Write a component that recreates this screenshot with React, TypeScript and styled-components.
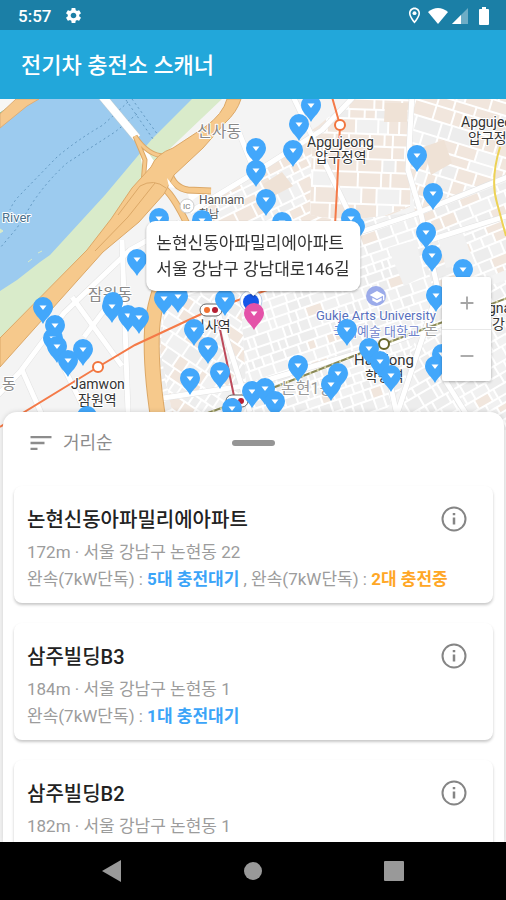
import React from "react";
import styled, { createGlobalStyle } from "styled-components";
import {
  MdAdd,
  MdOutlineLocationOn,
  MdRemove,
  MdSchool,
  MdSettings,
  MdSort,
} from "react-icons/md";

const GlobalStyle = createGlobalStyle`
  * { box-sizing: border-box; }
  body {
    margin: 0;
    background: #fff;
    font-family: Roboto, "Noto Sans CJK KR", sans-serif;
  }
  button {
    border: 0;
    padding: 0;
    background: none;
    color: inherit;
    font: inherit;
    cursor: pointer;
  }
  h1, h2, p, ul { margin: 0; padding: 0; }
  svg { display: block; }
`;

const Screen = styled.div`
  display: flex;
  flex-direction: column;
  height: 100vh;
  overflow: hidden;
`;

const StatusBar = styled.div`
  display: flex;
  flex: none;
  align-items: center;
  justify-content: space-between;
  height: 30px;
  padding: 1px 16px 0 18px;
  background: #1b7fa6;
  color: #fff;
`;

const StatusGroup = styled.div<{ $gap: number }>`
  display: flex;
  align-items: center;
  gap: ${(p) => p.$gap}px;
`;

const Clock = styled.span`
  font-size: 17px;
  font-weight: 500;
  line-height: 20px;
`;

const AppBar = styled.header`
  display: flex;
  flex: none;
  align-items: center;
  height: 69px;
  padding: 2px 21px 0;
  background: #22a7da;
  color: #fff;
`;

const AppTitle = styled.h1`
  font-size: 22px;
  font-weight: 500;
  line-height: 32px;
`;

const Main = styled.main`
  display: grid;
  flex: 1;
  min-height: 0;
  grid-template: minmax(0, 1fr) / minmax(0, 1fr);
  overflow: hidden;
`;

const MapArea = styled.section`
  position: relative;
  grid-area: 1 / 1;
  overflow: hidden;
`;

const MapDrawing = styled.svg`
  width: 100%;
  height: 100%;
`;

const Callout = styled.div`
  position: absolute;
  top: 122px;
  left: 50%;
  padding: 9px 10px;
  border-radius: 9px;
  background: #fff;
  color: #333;
  font-size: 17px;
  line-height: 26px;
  white-space: nowrap;
  transform: translateX(-50%);
  filter: drop-shadow(0 1px 1px rgba(0, 0, 0, 0.35));

  &::after {
    content: "";
    position: absolute;
    top: 100%;
    left: 50%;
    border: 5px solid transparent;
    border-top-color: #fff;
    transform: translateX(-50%);
  }
`;

const ZoomControl = styled.div`
  position: absolute;
  top: 178px;
  right: 15px;
  display: flex;
  flex-direction: column;
  width: 49px;
  border-radius: 2px;
  background: #fff;
  box-shadow: 0 1px 3px rgba(0, 0, 0, 0.3);
`;

const ZoomButton = styled.button`
  display: flex;
  align-items: center;
  justify-content: center;
  height: 52px;
  color: #a5a5a5;

  & + & { border-top: 1px solid #e8e8e8; }
`;

const Sheet = styled.section`
  z-index: 1;
  grid-area: 1 / 1;
  margin: 313px 2px 0 3px;
  border-radius: 14px 14px 0 0;
  background: #fff;
  box-shadow: 0 0 5px rgba(0, 0, 0, 0.15);
  overflow: hidden;
`;

const SheetHeader = styled.div`
  display: grid;
  grid-template-columns: 1fr auto 1fr;
  align-items: center;
  height: 74px;
  padding: 0 24px 12px;
`;

const SortButton = styled.button`
  display: flex;
  align-items: center;
  justify-self: start;
  gap: 8px;
  color: #8c8c8c;
  font-size: 18px;
  line-height: 26px;
`;

const Handle = styled.span`
  width: 43px;
  height: 6px;
  border-radius: 3px;
  background: #959595;
`;

const StationList = styled.ul`
  display: flex;
  flex-direction: column;
  gap: 20px;
  padding: 0 11px;
  list-style: none;
`;

const StationCard = styled.li`
  flex: none;
  min-height: 117px;
  padding: 16px 24px 10px 13px;
  border-radius: 8px;
  background: #fff;
  box-shadow: 0 2px 3px rgba(0, 0, 0, 0.22);
`;

const StationHeading = styled.div`
  display: flex;
  align-items: center;
  justify-content: space-between;
  height: 34px;
  margin-bottom: 3px;
`;

const StationName = styled.h2`
  padding-top: 1px;
  color: #222;
  font-size: 20px;
  font-weight: 500;
  line-height: 30px;
`;

const InfoButton = styled.button`
  color: #858585;
`;

const StationLine = styled.p`
  color: #9c9c9c;
  font-size: 17px;
  line-height: 27px;
  white-space: nowrap;
`;

const Availability = styled.strong<{ $busy?: boolean }>`
  color: ${(p) => (p.$busy ? "#ffa726" : "#3ba4f8")};
  font-weight: 700;
`;

const NavBar = styled.nav`
  display: grid;
  flex: none;
  grid-template-columns: repeat(3, 1fr);
  height: 58px;
  padding: 0 42px;
  background: #000;
`;

const NavButton = styled.button`
  display: flex;
  align-items: center;
  justify-content: center;
`;

const MapLabel = styled.text<{ $size?: number; $tone?: string; $halo?: number }>`
  fill: ${(p) => p.$tone ?? "#333"};
  font-size: ${(p) => p.$size ?? 13}px;
  paint-order: stroke;
  stroke: #fff;
  stroke-width: ${(p) => p.$halo ?? 2}px;
  stroke-linejoin: round;
`;

type Block = { x: number; y: number; w: number; h: number; fill: string };

const districts = [
  { id: "sinsa", area: "196,207 256,172 322,130 356,99 410,99 410,207 340,235 190,250", angle: -26, size: 10, warm: 0.5 },
  { id: "apgujeong", area: "350,99 412,99 410,206 360,225 310,215 312,130", angle: 2, size: 12, warm: 0.72 },
  { id: "cheongdam", area: "412,99 506,99 506,178 415,212 408,170", angle: 17, size: 12, warm: 0.65 },
  { id: "dosan", area: "418,216 506,182 506,270 432,300", angle: -22, size: 10, warm: 0.35 },
  { id: "nonhyeon", area: "172,240 418,212 440,330 385,412 165,430 158,350", angle: -19, size: 8, warm: 0.06 },
  { id: "yeongdong", area: "166,300 240,290 248,412 172,412 160,350", angle: 34, size: 9, warm: 0.22 },
  { id: "hakdong", area: "440,300 506,280 506,430 395,430 410,350", angle: -30, size: 8, warm: 0.05 },
];

function blocksFor(seed: number, size: number, warm: number): Block[] {
  let state = seed * 7919 + 17;
  const next = () => {
    state = (state * 16807) % 2147483647;
    return state / 2147483647;
  };
  next();
  const blocks: Block[] = [];
  let y = -200;
  while (y < 200) {
    const h = size * (0.6 + next() * 0.8);
    let x = -200;
    while (x < 200) {
      const w = size * (0.5 + next() * 1.5);
      const fill = next() < warm ? "#f1e6dd" : next() < 0.5 ? "#f1f1f1" : "#ededed";
      blocks.push({ x, y, w, h, fill });
      x += w + 2;
    }
    y += h + 2;
  }
  return blocks;
}

const mainRoads = [
  "M190 212 L256 172 L322 130 L360 90",
  "M412 95 L408 170 L420 210 L438 290 L425 330 L395 420",
  "M330 242 L415 214 L510 176",
  "M430 240 L510 215",
  "M150 400 L250 385 L385 345 L510 300",
  "M382 346 L398 420",
  "M445 380 L470 420",
  "M290 90 L350 215",
  "M-5 398 L20 372 L64 313 L130 250 L180 222",
  "M22 370 L42 415",
  "M48 335 L92 425",
  "M72 297 L122 366",
  "M84 337 L112 300",
  "M122 240 L128 412",
  "M238 130 L252 165",
  "M214 300 L250 412",
];

const pins: [number, number][] = [
  [311, 105], [299, 124], [293, 150], [256, 148], [256, 170], [266, 199],
  [417, 155], [433, 193], [426, 232], [432, 255], [282, 222], [355, 226],
  [351, 218], [159, 218], [202, 220], [137, 259], [43, 307], [55, 325],
  [53, 338], [57, 346], [83, 349], [68, 360], [113, 302], [112, 306],
  [128, 315], [139, 317], [178, 296], [164, 298], [225, 299], [194, 329],
  [208, 347], [190, 378], [220, 372], [232, 408], [87, 416], [463, 269],
  [436, 295], [347, 329], [369, 348], [380, 361], [391, 375], [298, 365],
  [338, 373], [331, 384], [252, 391], [265, 388], [275, 401], [442, 354],
  [435, 366],
];

function Pin({ x, y, color = "#42a7fb" }: { x: number; y: number; color?: string }) {
  return (
    <g transform={`translate(${x} ${y})`}>
      <path d="M0 17 C-3 11 -10 7 -10 0 A10 10 0 0 1 10 0 C10 7 3 11 0 17Z" fill={color} />
      <path d="M-3.5 -1.5 H3.5 L0 3Z" fill="#fff" />
    </g>
  );
}

function TransferBadge({ x, y }: { x: number; y: number }) {
  return (
    <g transform={`translate(${x} ${y})`}>
      <rect x="-11" y="-6" width="22" height="12" rx="6" fill="#fff" stroke="#666" />
      <circle cx="-4" r="3" fill="#f07030" />
      <circle cx="4" r="3" fill="#b51e32" />
    </g>
  );
}

function InfoIcon() {
  return (
    <svg width="30" height="30" viewBox="0 0 30 30" fill="none" stroke="currentColor" strokeWidth="2">
      <circle cx="15" cy="15" r="11.5" />
      <path d="M15 13.500 V20.500 M15 9 V11.200" strokeWidth="2.500" />
    </svg>
  );
}

function CityMap() {
  return (
    <MapDrawing viewBox="0 99 506 743" preserveAspectRatio="xMidYMin slice" role="img" aria-label="충전소 지도">
      <defs>
        {districts.map((d) => (
          <clipPath id={d.id} key={d.id}>
            <polygon points={d.area} />
          </clipPath>
        ))}
      </defs>
      <rect y="99" width="506" height="743" fill="#f4f4f4" />

      {districts.map((d, i) => {
        const points = d.area.split(" ").map((p) => p.split(",").map(Number));
        const cx = points.reduce((sum, p) => sum + p[0], 0) / points.length;
        const cy = points.reduce((sum, p) => sum + p[1], 0) / points.length;
        return (
          <g clipPath={`url(#${d.id})`} key={d.id}>
            <polygon points={d.area} fill="#fff" />
            <g transform={`translate(${cx} ${cy}) rotate(${d.angle})`}>
              {blocksFor(i + 3, d.size, d.warm).map((b, n) => (
                <rect key={n} x={b.x} y={b.y} width={b.w} height={b.h} fill={b.fill} />
              ))}
            </g>
          </g>
        );
      })}
      <polygon points="385,103 408,103 407,122 384,122" fill="#efe2d6" />
      <polygon points="423,147 444,140 452,163 431,175" fill="#efe2d6" />
      <polygon points="263,184 282,172 293,186 268,199" fill="#efe2d6" />
      <polygon points="388,248 416,240 424,276 404,286" fill="#f1f1f1" />
      <polygon points="438,238 462,231 474,262 446,268" fill="#f1f1f1" />
      <polygon points="196,99 350,99 318,126 196,196 178,180" fill="#f4f4f4" />

      <g fill="none" strokeLinejoin="round">
        {mainRoads.map((d) => <path key={d} d={d} stroke="#e2e2e2" strokeWidth="6" />)}
        {mainRoads.map((d) => <path key={d} d={d} stroke="#fff" strokeWidth="5" />)}
      </g>

      <path d="M0 99 H222 L160 158 L125 205 L87 250 L0 338Z" fill="#d9ebca" />
      <path d="M0 99 H192 L152 139 L105 195 L50 255 L40 262 L17 280 L0 291Z" fill="#9ccbef" />
      <path d="M0 99 H22 L0 117Z" fill="#f7f7f5" />
      <path d="M0 113 L20 99" stroke="#87bd89" fill="none" />
      <path d="M16 99 H39 L27 106 L0 128 V114Z" fill="#f6c88c" stroke="#dcae78" />
      <g fill="none" stroke="#6399c2" strokeDasharray="2 3">
        <path d="M128 102 L103 125 Q77 140 57 157 L20 195 Q13 202 10 210" />
        <path d="M137 114 L115 132 L67 163 Q48 180 33 202 L17 228 L0 248" />
        <path d="M126 100 L153 139 M132 99 L158 135" />
      </g>
      <path d="M0 229 L3 231 L0 233Z M28 262 L32 259 M38 253 L42 251" fill="#d9ebca" stroke="#d9ebca" />

      <path d="M102 96 L137 138" stroke="#b9cbd6" strokeWidth="9" fill="none" />
      <path d="M102 96 L137 138" stroke="#fff" strokeWidth="8" fill="none" />
      <path d="M137 136 L156 164 L145 182Z" fill="#fff" />
      <g fill="none" strokeLinejoin="round">
        <path d="M135 136 Q148 156 165 156 M135 136 L145 160 L143 184" stroke="#dca867" strokeWidth="5" />
        <path d="M135 136 Q148 156 165 156 M135 136 L145 160 L143 184" stroke="#f6c98c" strokeWidth="3" />
        <path d="M169 172 Q174 188 188 190 L211 191 M160 185 Q172 192 188 226" stroke="#dca867" strokeWidth="7" />
        <path d="M169 172 Q174 188 188 190 L211 191 M160 185 Q172 192 188 226" stroke="#f6c98c" strokeWidth="5" />
        <path d="M188 226 Q154 290 152 330 Q150 370 160 430" stroke="#dca867" strokeWidth="16" />
        <path d="M188 226 Q154 290 152 330 Q150 370 160 430" stroke="#f6c98c" strokeWidth="14" />
      </g>
      <path d="M227 99 H241 Q237 112 225 123 L203 148 L174 175 L164 194 L139 222 L103 252 L0 367 V338 L87 250 L111 219 L132 188 L151 167 Q156 154 173 148 L205 127 Q223 114 227 99Z" fill="#f6c98c" stroke="#dca867" />
      <path d="M155 183 L128 217 L95 251 M118 215 L140 186 Q154 178 166 188" fill="none" stroke="#dca867" />
      <path d="M167 178 L175 188 L169 187Z M188 194 L201 194 L190 202Z" fill="#fff" />

      <g fill="none" strokeWidth="2">
        <path d="M332 97 L340 125 L337 190 L335 225 L310 275 L210 310 L135 345 L98 367 L0 427" stroke="#f47a48" />
        <path d="M218 320 L234 396" stroke="#bd4a5b" />
        <path d="M205 414 L238 402 L275 387 L384 344 L510 297" stroke="#8a8957" />
        <path d="M205 414 L238 402 L275 387 L384 344 L510 297" stroke="#d3d1a1" strokeDasharray="2 6" />
        <path d="M500 147 Q490 180 497 203 L506 236" stroke="#edd255" />
      </g>
      <circle cx="340" cy="125" r="5" fill="#fff" stroke="#f1743c" strokeWidth="2" />
      <circle cx="98" cy="367" r="5" fill="#fff" stroke="#f1743c" strokeWidth="2" />
      <circle cx="384" cy="344" r="5" fill="#fff" stroke="#666529" strokeWidth="2" />
      <TransferBadge x={211} y={310} />
      <TransferBadge x={237} y={401} />
      <circle cx="187" cy="206" r="7" fill="#fff" stroke="#ccc" />
      <MapLabel x="183" y="209" $size={8} $tone="#777" $halo={0}>IC</MapLabel>
      <circle cx="376" cy="296" r="10" fill="#9babea" />
      <MdSchool x="369" y="289" width="14" height="14" color="#fff" />

      <MapLabel x="197" y="137" $size={16} $tone="#888">신사동</MapLabel>
      <MapLabel x="88" y="300" $size={16} $tone="#888">잠원동</MapLabel>
      <MapLabel x="2" y="389" $size={15} $tone="#888">동</MapLabel>
      <MapLabel x="281" y="394" $size={16} $tone="#999">논현1동</MapLabel>
      <MapLabel x="424" y="335" $size={15} $tone="#999">논</MapLabel>
      <MapLabel x="2" y="222" $tone="#49708d">River</MapLabel>
      <MapLabel x="199" y="204" $size={12} $tone="#555">Hannam</MapLabel>
      <MapLabel x="199" y="218" $size={11} $tone="#555">한남</MapLabel>
      <MapLabel x="307" y="147" $size={14}>Apgujeong</MapLabel>
      <MapLabel x="315" y="162" $size={14}>압구정역</MapLabel>
      <MapLabel x="461" y="127" $size={14}>Apgujeong</MapLabel>
      <MapLabel x="468" y="143" $size={14}>압구정로</MapLabel>
      <MapLabel x="71" y="389" $size={14}>Jamwon</MapLabel>
      <MapLabel x="78" y="405" $size={14}>잠원역</MapLabel>
      <MapLabel x="192" y="331" $size={14}>신사역</MapLabel>
      <MapLabel x="316" y="320" $tone="#5870bd">Gukje Arts University</MapLabel>
      <MapLabel x="333" y="336" $tone="#6f83cb">국제예술 대학교</MapLabel>
      <MapLabel x="354" y="365" $size={15}>Hakdong</MapLabel>
      <MapLabel x="365" y="381" $size={14}>학동역</MapLabel>
      <MapLabel x="463" y="313" $size={14}>Gangnam</MapLabel>
      <MapLabel x="492" y="329" $size={14}>강남</MapLabel>

      <circle cx="251" cy="301" r="11" fill="#fff" stroke="#b9cce8" />
      <circle cx="251" cy="302" r="8" fill="#1557e8" />
      {pins.map(([x, y], i) => <Pin key={i} x={x} y={y} />)}
      <Pin x={254} y={313} color="#e452a8" />
    </MapDrawing>
  );
}

type Status = { count: number; busy?: boolean };
type Station = { name: string; distance: string; address: string; statuses: Status[] };

const stations: Station[] = [
  { name: "논현신동아파밀리에아파트", distance: "172m", address: "서울 강남구 논현동 22", statuses: [{ count: 5 }, { count: 2, busy: true }] },
  { name: "삼주빌딩B3", distance: "184m", address: "서울 강남구 논현동 1", statuses: [{ count: 1 }] },
  { name: "삼주빌딩B2", distance: "182m", address: "서울 강남구 논현동 1", statuses: [{ count: 1 }] },
];

function StationItem({ station }: { station: Station }) {
  return (
    <StationCard>
      <StationHeading>
        <StationName>{station.name}</StationName>
        <InfoButton type="button" aria-label={`${station.name} 정보`}>
          <InfoIcon />
        </InfoButton>
      </StationHeading>
      <StationLine>{station.distance} · {station.address}</StationLine>
      <StationLine>
        {station.statuses.map((s, i) => (
          <React.Fragment key={i}>
            {i > 0 && " , "}완속(7kW단독) :{" "}
            <Availability $busy={s.busy}>{s.count}대 {s.busy ? "충전중" : "충전대기"}</Availability>
          </React.Fragment>
        ))}
      </StationLine>
    </StationCard>
  );
}

export default function App() {
  return (
    <Screen>
      <GlobalStyle />
      <StatusBar>
        <StatusGroup $gap={13}>
          <Clock>5:57</Clock>
          <MdSettings size={19} />
        </StatusGroup>
        <StatusGroup $gap={4}>
          <MdOutlineLocationOn size={19} />
          <svg width="20" height="16" viewBox="0 0 20 16" fill="#fff">
            <path d="M0 4 Q10 -4 20 4 L10 16Z" />
          </svg>
          <svg width="16" height="16" viewBox="0 0 16 16">
            <path d="M0 16 L16 0 V16Z" fill="#6dadc6" />
            <path d="M0 16 L9 7 V16Z" fill="#fff" />
          </svg>
          <svg width="18" height="18" viewBox="0 0 18 18" fill="#fff">
            <path d="M10 0 H14 V2 H16 Q17 2 17 3 V17 Q17 18 16 18 H8 Q7 18 7 17 V3 Q7 2 8 2 H10Z" />
          </svg>
        </StatusGroup>
      </StatusBar>
      <AppBar>
        <AppTitle>전기차 충전소 스캐너</AppTitle>
      </AppBar>
      <Main>
        <MapArea>
          <CityMap />
          <Callout>
            <p>논현신동아파밀리에아파트</p>
            <p>서울 강남구 강남대로146길</p>
          </Callout>
          <ZoomControl>
            <ZoomButton type="button" aria-label="확대"><MdAdd size={22} /></ZoomButton>
            <ZoomButton type="button" aria-label="축소"><MdRemove size={22} /></ZoomButton>
          </ZoomControl>
        </MapArea>
        <Sheet>
          <SheetHeader>
            <SortButton type="button">
              <MdSort size={28} />
              거리순
            </SortButton>
            <Handle />
          </SheetHeader>
          <StationList>
            {stations.map((s) => <StationItem key={s.name} station={s} />)}
          </StationList>
        </Sheet>
      </Main>
      <NavBar>
        <NavButton type="button" aria-label="뒤로">
          <svg width="20" height="22" viewBox="0 0 20 22"><path d="M0 11 L19 0 V22Z" fill="#999" /></svg>
        </NavButton>
        <NavButton type="button" aria-label="홈">
          <svg width="18" height="18" viewBox="0 0 18 18"><circle cx="9" cy="9" r="9" fill="#999" /></svg>
        </NavButton>
        <NavButton type="button" aria-label="최근 앱">
          <svg width="20" height="20" viewBox="0 0 20 20"><rect width="20" height="20" rx="1" fill="#999" /></svg>
        </NavButton>
      </NavBar>
    </Screen>
  );
}
